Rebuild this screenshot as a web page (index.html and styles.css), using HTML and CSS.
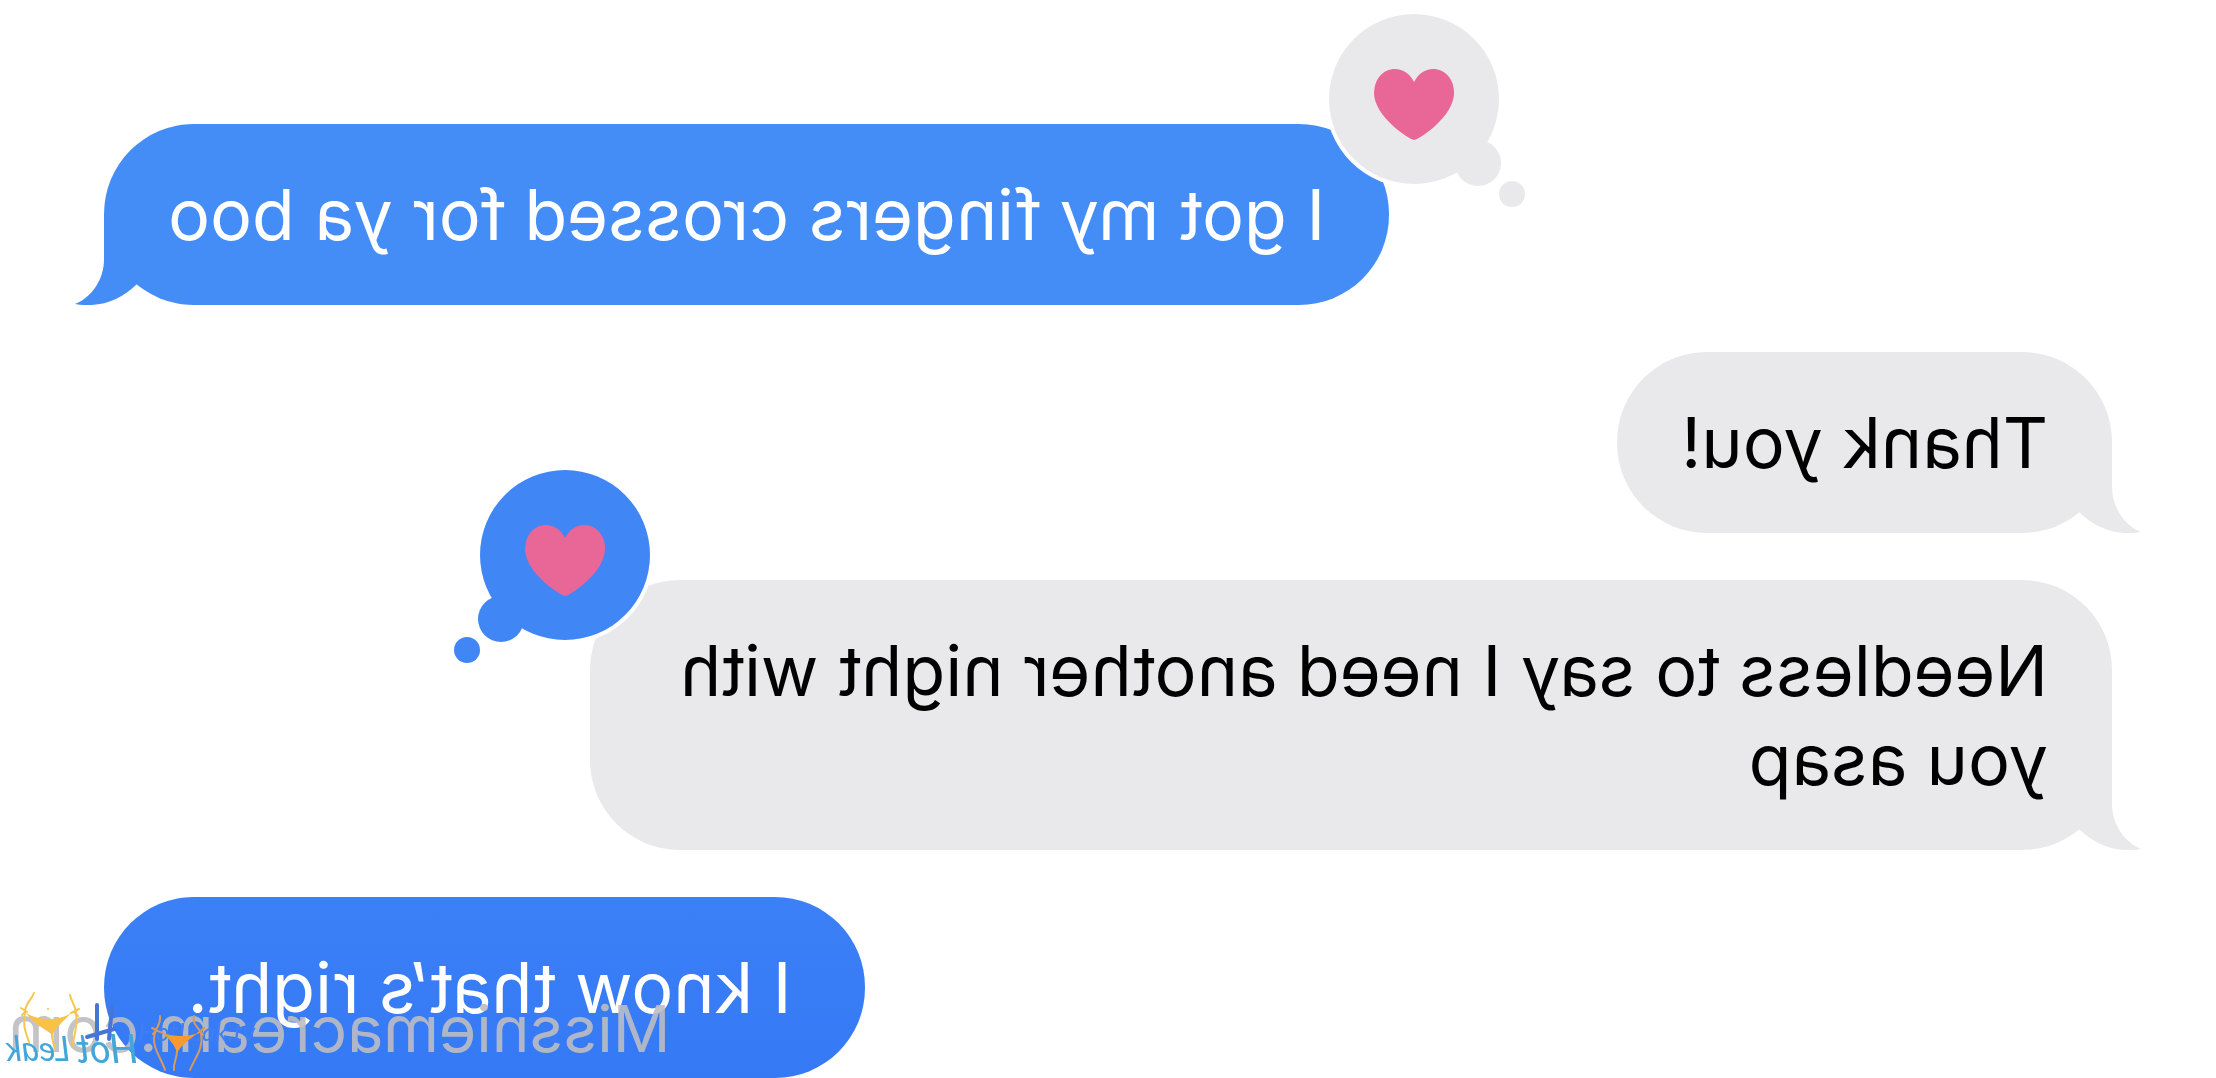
FILE: index.html
```html
<!DOCTYPE html>
<html lang="en">
<head>
  <meta charset="UTF-8">
  <title>Messages</title>
  <link rel="stylesheet" href="styles.css">
</head>
<body>
  <main class="thread">
    <div class="message sent">
      <div class="bubble">
        I got my fingers crossed for ya boo
        <svg class="tail" viewBox="0 0 70 92"><path d="M40 0 V46 C40 66 52 84 69 91 C45 95 24 88 7 71 L0 0 Z"/></svg>
        <svg class="reaction" viewBox="0 0 204 200">
          <circle class="gap" cx="112" cy="86" r="89"/>
          <circle cx="112" cy="86" r="85"/>
          <circle cx="48" cy="150" r="23"/>
          <circle cx="14" cy="181" r="13"/>
          <path class="heart" d="M112 127 C106 126 72 103 72 80 C72 66 81 56 93 56 C101 56 108 61 112 69 C116 61 123 56 131 56 C143 56 152 66 152 80 C152 103 118 126 112 127 Z"/>
        </svg>
      </div>
    </div>
    <div class="message received">
      <div class="bubble">
        Thank you!
        <svg class="tail" viewBox="0 0 70 92"><path d="M40 0 V46 C40 66 52 84 69 91 C45 95 24 88 7 71 L0 0 Z"/></svg>
      </div>
    </div>
    <div class="message received">
      <div class="bubble">
        Needless to say I need another night with you asap
        <svg class="tail" viewBox="0 0 70 92"><path d="M40 0 V46 C40 66 52 84 69 91 C45 95 24 88 7 71 L0 0 Z"/></svg>
        <svg class="reaction" viewBox="0 0 204 200">
          <circle class="gap" cx="112" cy="86" r="89"/>
          <circle cx="112" cy="86" r="85"/>
          <circle cx="48" cy="150" r="23"/>
          <circle cx="14" cy="181" r="13"/>
          <path class="heart" d="M112 127 C106 126 72 103 72 80 C72 66 81 56 93 56 C101 56 108 61 112 69 C116 61 123 56 131 56 C143 56 152 66 152 80 C152 103 118 126 112 127 Z"/>
        </svg>
      </div>
    </div>
    <div class="message sent last">
      <div class="bubble">I know that’s right.&nbsp;</div>
    </div>

    <div class="watermark">Missniemacream.com</div>
    <svg class="logo" viewBox="0 0 280 90">
      <text class="logo-faint" x="-142" y="54" transform="scale(-1 1)">HotLeak.tv</text>
      <!-- orange figure -->
      <g class="figure orange">
        <path d="M120 29 C119 38 124 40 125 46 C129 60 119 70 115 83"/>
        <path d="M86 29 C88 38 81 40 79 46 C76 62 86 72 90 83"/>
        <path d="M103 64 C103 72 107 76 106 83"/>
        <path d="M117 46 L125 43 M124 43 L128 41 M124 44 L127 47 M82 46 L79 44 L76 41 M79 45 L77 48"/>
        <path class="fill" d="M117 46 C107 50 91 50 82 46 C90 52 99 58 103 66 C106 56 112 52 117 46 Z"/>
      </g>
      <!-- yellow figure -->
      <g class="figure yellow">
        <path d="M246 6 C249 14 255 16 255 25 C258 38 254 46 251 55"/>
        <path d="M210 8 C209 14 205 18 204 25 C202 40 206 50 208 60"/>
        <path d="M228 47 C229 54 225 57 225 62"/>
        <path d="M253 25 L259 21 M255 25 L258 28 M209 26 L201 22 M205 26 L202 29"/>
        <circle cx="232" cy="22" r="1"/>
        <path class="fill" d="M254 26 C241 34 221 34 209 26 C216 34 224 40 228 48 C234 42 246 38 254 26 Z"/>
      </g>
      <text class="logo-text" x="142" y="76">Hot</text>
      <text class="logo-text small" x="210" y="74">Leak</text>
      <path class="strokes" d="M183 18 V52 M168 20 L171 52 M193 50 L166 42"/>
    </svg>
  </main>
</body>
</html>
```
FILE: styles.css
```css
body {
  margin: 0;
  background: #fff;
  font-family: Inter, "Liberation Sans", sans-serif;
}
/* the whole conversation is flipped left to right */
.thread {
  position: relative;
  transform: scaleX(-1);
  display: flex;
  flex-direction: column;
  gap: 47px;
  padding: 124px 104px 0;
  overflow: hidden;
}
.message {
  display: flex;
}
.sent {
  justify-content: flex-end;
}
.bubble {
  position: relative;
  box-sizing: border-box;
  max-width: 75.8%;
  padding: 46px 64px;
  border-radius: 90px;
  background: #e9e9eb;
  color: #000;
  fill: #e9e9eb;
  font-size: 70px;
  line-height: 89px;
}
.sent .bubble {
  background: #448df6;
  color: #fff;
  fill: #448df6;
}
.last .bubble {
  padding-left: 74px;
  background: linear-gradient(#3b80f6, #3579f5);
}
.tail {
  position: absolute;
  bottom: 0;
  right: -30px;
  width: 70px;
  height: 92px;
}
.received .tail {
  right: auto;
  left: -30px;
  transform: scaleX(-1);
}
.reaction {
  position: absolute;
  top: -111px;
  left: -137px;
  width: 204px;
  height: 200px;
  fill: #e9e9eb;
}
.received .reaction {
  left: auto;
  right: -137px;
  transform: scaleX(-1);
  fill: #4086f5;
}
.gap {
  fill: #fff;
}
.reaction .heart {
  fill: #e86797;
}
.watermark {
  position: absolute;
  right: 8px;
  bottom: 16px;
  color: #bdbdc2;
  opacity: 0.9;
  font-size: 64px;
  line-height: 66px;
}
.logo {
  position: absolute;
  right: 0;
  bottom: 1px;
  width: 280px;
  height: 90px;
}
.figure path {
  fill: none;
  stroke-width: 2;
  stroke-linecap: round;
}
.orange path {
  stroke: #d89a5c;
}
.yellow path {
  stroke: #f5c650;
}
.orange .fill {
  fill: #f79a32;
  stroke: none;
}
.yellow .fill {
  fill: #f8c247;
  stroke: none;
}
.yellow circle {
  fill: #f8c247;
}
.logo-text {
  fill: #43a6d8;
  font-family: Lato, sans-serif;
  font-size: 40px;
  font-style: italic;
}
.small {
  font-size: 34px;
}
.logo-faint {
  fill: #3f7ff2;
  font-family: Lato, sans-serif;
  font-size: 26px;
  font-style: italic;
}
.strokes {
  fill: none;
  stroke: #4675d6;
  stroke-width: 4;
  stroke-linecap: round;
}
```
